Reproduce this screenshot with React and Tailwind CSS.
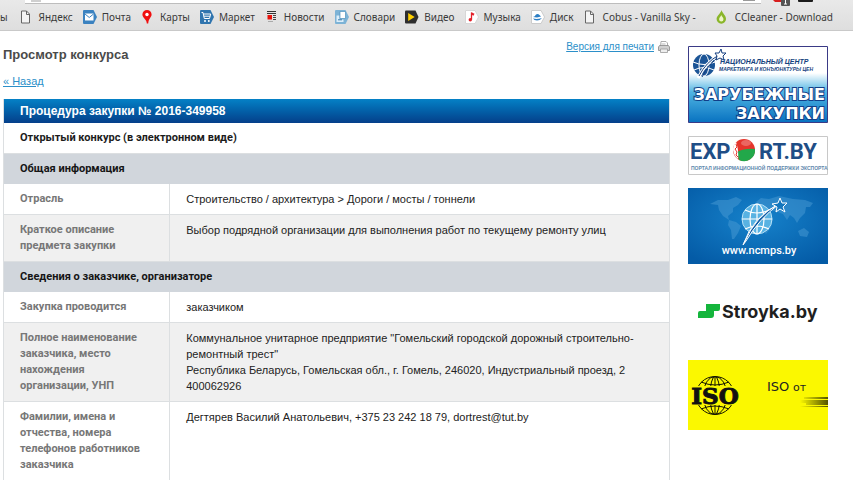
import React from 'react';

const bookmarks = [
  { label: 'Яндекс', icon: PageIcon },
  { label: 'Почта', icon: MailIcon },
  { label: 'Карты', icon: PinIcon },
  { label: 'Маркет', icon: CartIcon },
  { label: 'Новости', icon: NewsIcon },
  { label: 'Словари', icon: DictionaryIcon },
  { label: 'Видео', icon: VideoIcon },
  { label: 'Музыка', icon: MusicIcon },
  { label: 'Диск', icon: DiskIcon },
  { label: 'Cobus - Vanilla Sky -', icon: PageIcon, truncated: true },
  { label: 'CCleaner - Download', icon: DropIcon },
];

const sections = [
  {
    title: 'Общая информация',
    rows: [
      { label: 'Отрасль', lines: ['Строительство / архитектура > Дороги / мосты / тоннели'] },
      {
        label: 'Краткое описание предмета закупки',
        lines: ['Выбор подрядной организации для выполнения работ по текущему ремонту улиц'],
      },
    ],
  },
  {
    title: 'Сведения о заказчике, организаторе',
    rows: [
      { label: 'Закупка проводится', lines: ['заказчиком'] },
      {
        label: 'Полное наименование заказчика, место нахождения организации, УНП',
        lines: [
          'Коммунальное унитарное предприятие "Гомельский городской дорожный строительно-ремонтный трест"',
          'Республика Беларусь, Гомельская обл., г. Гомель, 246020, Индустриальный проезд, 2',
          '400062926',
        ],
      },
      {
        label: 'Фамилии, имена и отчества, номера телефонов работников заказчика',
        lines: ['Дегтярев Василий Анатольевич, +375 23 242 18 79, dortrest@tut.by'],
      },
    ],
  },
];

function Icon({ children }) {
  return (
    <svg viewBox="0 0 14 14" className="h-3.5 w-3.5 shrink-0" aria-hidden="true">
      {children}
    </svg>
  );
}

function PageIcon() {
  return (
    <Icon>
      <path d="M1.500 1h5l3 3v9h-8z" fill="#f4f4f4" stroke="#666" />
      <path d="M6.500 1v3.500h3" fill="none" stroke="#666" />
    </Icon>
  );
}

function MailIcon() {
  return (
    <Icon>
      <path d="M1 0h9.500L14 7l-3.500 7H1q-1 0-1-1V1q0-1 1-1z" fill="#3b82c0" />
      <path d="M2 3.500h8.500v7H2z" fill="#fff" />
      <path d="M2 4l4.250 3.500L10.500 4" fill="none" stroke="#3b82c0" />
    </Icon>
  );
}

function PinIcon() {
  return (
    <Icon>
      <path d="M6 0a4.600 4.600 0 0 1 4.600 4.600c0 2.800-2.800 3.400-3.400 8.900H5.800c0-4-4.400-5.500-4.400-8.900A4.600 4.600 0 0 1 6 0z" fill="#f00f0f" />
      <circle cx="6" cy="4.500" r="1.700" fill="#fff" />
    </Icon>
  );
}

function CartIcon() {
  return (
    <Icon>
      <path d="M1 0h9.500L14 7l-3.500 7H1q-1 0-1-1V1q0-1 1-1z" fill="#2f74ae" />
      <path d="M1.500 2.500H3l1.300 6h5.200l1.200-4.500H3.500M3.800 6.200h6.300" fill="none" stroke="#fff" />
      <circle cx="5" cy="11" r="1" fill="#fff" />
      <circle cx="8.800" cy="11" r="1" fill="#fff" />
    </Icon>
  );
}

function NewsIcon() {
  return (
    <Icon>
      <path d="M2 1.500h9M2 3.500h9" stroke="#333" strokeWidth="1.200" />
      <path d="M2.500 5h4.500v4.500H2.500z" fill="#e8140c" />
      <path d="M8 5.500h3M8 7.500h3M8 9.500h3" stroke="#444" />
      <path d="M3 11.500h5" stroke="#aaa" />
    </Icon>
  );
}

function DictionaryIcon() {
  return (
    <Icon>
      <path d="M1 0h9.500L14 7l-3.500 7H1q-1 0-1-1V1q0-1 1-1z" fill="#7db3d6" />
      <path d="M1.500 5.500v6.500h7V9.500h-4v-4z" fill="#dceefa" />
      <path d="M5 1.500h5.500V8.500H5z" fill="#fff" stroke="#4e90bd" strokeWidth=".7" />
      <path d="M3 9.800h4" stroke="#3d7cab" />
    </Icon>
  );
}

function VideoIcon() {
  return (
    <Icon>
      <path d="M1 .5h9.500L13.500 7l-3 6.500H1q-1 0-1-1v-11q0-1 1-1z" fill="#2e2e2e" />
      <path d="M3.200 3l6.500 4-6.500 4z" fill="#ffd000" />
    </Icon>
  );
}

function MusicIcon() {
  return (
    <Icon>
      <path d="M1 .5h9L13.500 7 10 13.500H1q-.5 0-.5-.5V1q0-.5.5-.5z" fill="#fff" stroke="#ccc" strokeWidth=".7" />
      <path d="M6.500 2.500v7.200" stroke="#e3222b" strokeWidth="1.300" />
      <path d="M6.500 2.200l3 1.500-1 2-2-1z" fill="#e3222b" />
      <circle cx="5.300" cy="9.700" r="1.700" fill="#e3222b" />
    </Icon>
  );
}

function DiskIcon() {
  return (
    <Icon>
      <path d="M1 .5h9L13.500 7 10 13.500H1q-.5 0-.5-.5V1q0-.5.5-.5z" fill="#fff" stroke="#bbb" strokeWidth=".7" />
      <path d="M2 7q2-.5 3-2.500 2-1 3.500.5L10 6.500 6 7.500z" fill="#2c7ec4" />
      <path d="M2 8.500q4 1 9-.5-2 2.500-5 2.500T2 8.500z" fill="#2c7ec4" />
    </Icon>
  );
}

function DropIcon() {
  return (
    <Icon>
      <path d="M5.500 0c.5 3 4.500 5 4.500 9a4.700 4.700 0 0 1-9.400 0C.6 5.500 4.500 4 5.500 0z" fill="#8ab62a" />
      <path d="M5.300 5c.3 1.500 2.200 2.500 2.200 4.300a2.200 2.200 0 0 1-4.400 0C3.100 7.500 5 6.500 5.300 5z" fill="#eef5c8" />
    </Icon>
  );
}

function PrinterIcon() {
  return (
    <svg viewBox="0 0 12 12" className="h-3 w-3" aria-hidden="true">
      <path d="M3 .5h5l1.500 1.500v3.500H2.500z" fill="#fff" stroke="#999" strokeWidth=".8" />
      <path d="M1.500 4.500h9l1 1.500v3.500H.5V6z" fill="#d0d0d0" stroke="#888" strokeWidth=".8" />
      <path d="M2.500 8h7v3.500h-7z" fill="#eee" stroke="#999" strokeWidth=".8" />
      <path d="M3.500 3h4" stroke="#aaa" strokeWidth=".8" />
    </svg>
  );
}

function BrowserBar() {
  return (
    <header className="h-[31px] border-b border-[#c9c9c9] bg-linear-to-b from-[#e9e9e9] to-[#dedede]">
      <div className="flex h-1 items-start justify-between pl-[25px]">
        <div className="flex h-1 flex-1 justify-between border-b border-[#bdbdbd] bg-white px-1.5">
          <span className="h-0.5 w-2.5 bg-[#cfcfcf]" />
          <span className="h-px w-3 bg-[#999]" />
        </div>
        <svg viewBox="0 0 80 6" className="ml-3 h-1.5 w-20 shrink-0" aria-hidden="true">
          <path d="M0 0h9l-1 2H2z" fill="#d81f1f" />
          <path d="M8 0h9v5q0 1-1 1H9q-1 0-1-1z" fill="#555" />
          <path d="M12.500 0v4M11 4h3" stroke="#fff" />
          <path d="M25 0h15v1q0 1-1 1H26q-1 0-1-1z" fill="#1b1b1b" />
        </svg>
      </div>
      <nav className="flex h-[26px] items-center gap-2.5 overflow-hidden whitespace-nowrap font-['Noto_Sans','Open_Sans',sans-serif] text-[10px] text-[#3a3a3a]">
        <a href="#" className="pr-0.5">ы</a>
        {bookmarks.map(({ label, icon: BookmarkIcon, truncated }) => (
          <a key={label} href="#" className={`flex shrink-0 items-center gap-[5px] ${truncated ? 'pr-2.5' : ''}`}>
            <BookmarkIcon />
            {label}
          </a>
        ))}
      </nav>
    </header>
  );
}

function ProcurementTable() {
  return (
    <table className="w-full border-separate border-spacing-0 border-x border-[#dcdfe1] text-left text-[11px] leading-4">
      <thead>
        <tr>
          <th
            colSpan={2}
            className="h-6 bg-linear-to-b from-[#0581c6] to-[#053f8a] px-4 py-0 text-[12px] text-white"
          >
            Процедура закупки № 2016-349958
          </th>
        </tr>
      </thead>
      <tbody className="font-['Roboto','Liberation_Sans',sans-serif]">
        <tr>
          <th colSpan={2} className="border-b border-[#dcdfe1] px-4 py-[7px] text-[#1c1c1c]">
            Открытый конкурс (в электронном виде)
          </th>
        </tr>
      </tbody>
      {sections.map((section) => (
        <tbody key={section.title} className="font-['Roboto','Liberation_Sans',sans-serif]">
          <tr>
            <th colSpan={2} className="bg-[#d1d6dc] px-4 py-[7px] text-[#151515]">
              {section.title}
            </th>
          </tr>
          {section.rows.map((row) => (
            <tr key={row.label} className="align-top odd:bg-[#f0f0f0]">
              <th className="w-1/4 border-b border-r border-[#dcdfe1] py-[7px] pl-4 pr-6 text-[#777]">
                {row.label}
              </th>
              <td className="border-b border-[#dcdfe1] px-4 py-[7px] font-['Liberation_Sans',Arial,sans-serif] text-[#222]">
                {row.lines.map((line) => (
                  <p key={line}>{line}</p>
                ))}
              </td>
            </tr>
          ))}
        </tbody>
      ))}
    </table>
  );
}

function ForeignBanner() {
  return (
    <svg viewBox="0 0 140 77" className="block w-full" role="img" aria-label="Зарубежные закупки">
      <defs>
        <linearGradient id="foreign" x1="0" y1="0" x2="0" y2="1">
          <stop offset=".35" stopColor="#fff" />
          <stop offset=".6" stopColor="#4fb4e3" />
          <stop offset="1" stopColor="#0872c0" />
        </linearGradient>
      </defs>
      <path d="M.5.5h139v76H.5z" fill="url(#foreign)" stroke="#3a3a86" />
      <circle cx="16" cy="19" r="11" fill="#1b5496" />
      <g fill="none" stroke="#fff">
        <ellipse cx="16" cy="19" rx="5" ry="11" />
        <path d="M5 16q11 5 22 0M6 24q10-5 20 0" />
        <path d="M10 32Q18 16 32 8" strokeWidth="3" />
      </g>
      <path d="M11 30Q18 16 31 9M14 31Q20 18 33 9" fill="none" stroke="#153f80" />
      <path d="M33 3l1 4 4 0-3 3 1 4-4-2-4 2 1-4-2-3 4 0z" fill="#fff" stroke="#153f80" />
      <g fontFamily="Liberation Sans, sans-serif" fontWeight="bold" fontStyle="italic" fill="#15437e">
        <text x="32" y="18" fontSize="7">НАЦИОНАЛЬНЫЙ ЦЕНТР</text>
        <text x="31" y="25" fontSize="5">МАРКЕТИНГА И КОНЪЮНКТУРЫ ЦЕН</text>
      </g>
      <g
        fontFamily="DejaVu Sans, sans-serif"
        fontWeight="bold"
        fill="#fff"
        stroke="#123f88"
        strokeWidth="2"
        paintOrder="stroke"
        textAnchor="end"
        fontSize="16"
      >
        <text x="137" y="54">ЗАРУБЕЖНЫЕ</text>
        <text x="137" y="73">ЗАКУПКИ</text>
      </g>
    </svg>
  );
}

function ExportBanner() {
  return (
    <svg viewBox="0 0 140 39" className="block w-full" role="img" aria-label="Export.by">
      <path d="M.5.5h139v38H.5z" fill="#fff" stroke="#c8c8c8" />
      <g fontFamily="Roboto, sans-serif" fontWeight="bold" fontSize="22" fill="#1f4e86">
        <text x="2" y="23">EXP</text>
        <text x="71" y="23">RT.BY</text>
      </g>
      <circle cx="56" cy="14" r="11" fill="#e5352c" />
      <path d="M49 16q8-4 18-3a11 11 0 0 1-16 11z" fill="#22a84a" />
      <path d="M48 6q-3 3-3 8 1 6 5 9 1-9-2-17z" fill="#fff" />
      <path d="M48 8l1 3-2 2 2 3-1 3 2 2" fill="none" stroke="#e5352c" />
      <ellipse cx="58" cy="7" rx="5" ry="3" fill="#fff" opacity=".25" />
      <text x="3" y="34" fontFamily="Liberation Sans, sans-serif" fontWeight="bold" fontSize="5" fill="#6189ad">
        ПОРТАЛ ИНФОРМАЦИОННОЙ ПОДДЕРЖКИ ЭКСПОРТА
      </text>
    </svg>
  );
}

function NcmpsBanner() {
  return (
    <svg viewBox="0 0 140 76" className="block w-full" role="img" aria-label="www.ncmps.by">
      <defs>
        <radialGradient id="ncmps" cx=".5" cy=".4" r=".7">
          <stop offset="0" stopColor="#1682cb" />
          <stop offset="1" stopColor="#045ba6" />
        </radialGradient>
      </defs>
      <path d="M0 0h140v76H0z" fill="url(#ncmps)" />
      <g fill="#4a9bd4" opacity=".5">
        <path d="M22 16l8-4 10 0 8-3 6 3-4 5-5 3 0 4-5 4 1 4-6-4-4-6-1-5z" />
        <path d="M41 32l7 2 5 4-3 7-4 6-2 0-1-9-3-5z" />
        <path d="M68 14l5-4 8 1 10-3 14 3 12 1 8 3-3 4-4 0-1 6-5 5-3 5-3-5-4-3-3 5-4-6-8-3-8 0-5-4z" />
        <path d="M70 26l9-1 6 6-2 8-5 7-4-6-5-7z" />
        <path d="M110 43l6-3 5 4-2 5-7-1z" />
      </g>
      <circle cx="69" cy="31" r="15" fill="#58b2e2" stroke="#b9e2f7" />
      <g fill="none" stroke="#fff" strokeWidth="1.200">
        <ellipse cx="69" cy="31" rx="7" ry="15" />
        <path d="M54 31h30M57 22q12 6 24 0M57 41q12-6 24 0M69 16v30" />
      </g>
      <path d="M55 57Q65 28 91 16 71 31 58 53z" fill="#0c5ca6" stroke="#fff" />
      <path d="M56 55Q68 27 91 16" fill="none" stroke="#fff" />
      <path d="M92 10l2 5 5 0-4 4 2 5-5-3-4 3 1-5-5-3 6-1z" fill="#1476bd" stroke="#fff" />
      <text x="71" y="66" textAnchor="middle" fontFamily="Roboto, sans-serif" fontWeight="500" fontSize="11" fill="#fff">
        www.ncmps.by
      </text>
    </svg>
  );
}

function StroykaBanner() {
  return (
    <svg viewBox="0 0 140 70" className="block w-full" role="img" aria-label="Stroyka.by">
      <path d="M18 27h14v5q0 2-2 2h-4v4q0 3-3 3H10v-5q0-2 2-2h6z" fill="#14b53c" />
      <text x="34" y="41" fontFamily="Inter, sans-serif" fontWeight="700" fontSize="18" fill="#1f1f1f">
        Stroyka.by
      </text>
    </svg>
  );
}

function IsoBanner() {
  return (
    <svg viewBox="0 0 140 70" className="block w-full" role="img" aria-label="ISO">
      <defs>
        <linearGradient id="streak">
          <stop offset="0" stopColor="#2a2a00" stopOpacity="0" />
          <stop offset="1" stopColor="#2a2a00" stopOpacity=".8" />
        </linearGradient>
      </defs>
      <path d="M0 0h140v70H0z" fill="#fbf800" />
      <g fill="none" stroke="#161600">
        <circle cx="27" cy="35.500" r="19" />
        <ellipse cx="27" cy="35.500" rx="12" ry="19" />
        <ellipse cx="27" cy="35.500" rx="5" ry="19" />
        <path d="M13 22q14 6 28 0M13 49q14-6 28 0M27 16v39" />
      </g>
      <path d="M2 26h50v19H2z" fill="#fbf800" />
      <text
        x="27"
        y="44"
        textAnchor="middle"
        fontFamily="DejaVu Serif, serif"
        fontWeight="bold"
        fontSize="23"
        fill="#111"
        stroke="#111"
      >
        ISO
      </text>
      <text x="79" y="31" fontFamily="DejaVu Sans, sans-serif" fontSize="13" fill="#222">
        ISO
      </text>
      <text x="105" y="31" fontFamily="DejaVu Sans, sans-serif" fontSize="11" fill="#222">
        от
      </text>
      <path d="M116 37h24v2h-24zM112 40h28v3h-28zM118 43h22v2h-22zM112 46h28v1h-28z" fill="url(#streak)" />
    </svg>
  );
}

export default function App() {
  return (
    <div className="min-h-screen bg-white font-['Liberation_Sans',Arial,sans-serif]">
      <BrowserBar />
      <div className="flex items-start gap-[18px] pl-[3px] pr-[25px]">
        <main className="min-w-0 flex-1 pt-2">
          <div className="flex items-start justify-between">
            <h1 className="pt-2 text-[13px] font-bold leading-4 text-[#4a4a4a]">Просмотр конкурса</h1>
            <a href="#" className="flex items-center gap-1 text-[10px] leading-4 text-[#2b8fc9]">
              <span className="underline">Версия для печати</span>
              <PrinterIcon />
            </a>
          </div>
          <a href="#" className="mb-2.5 mt-2.5 block w-fit text-[11px] leading-4 text-[#2b8fc9] underline">
            « Назад
          </a>
          <ProcurementTable />
        </main>
        <aside className="flex w-[140px] shrink-0 flex-col gap-[13px] pt-[15px]">
          <a href="#"><ForeignBanner /></a>
          <a href="#"><ExportBanner /></a>
          <a href="#"><NcmpsBanner /></a>
          <a href="#"><StroykaBanner /></a>
          <a href="#"><IsoBanner /></a>
        </aside>
      </div>
    </div>
  );
}
